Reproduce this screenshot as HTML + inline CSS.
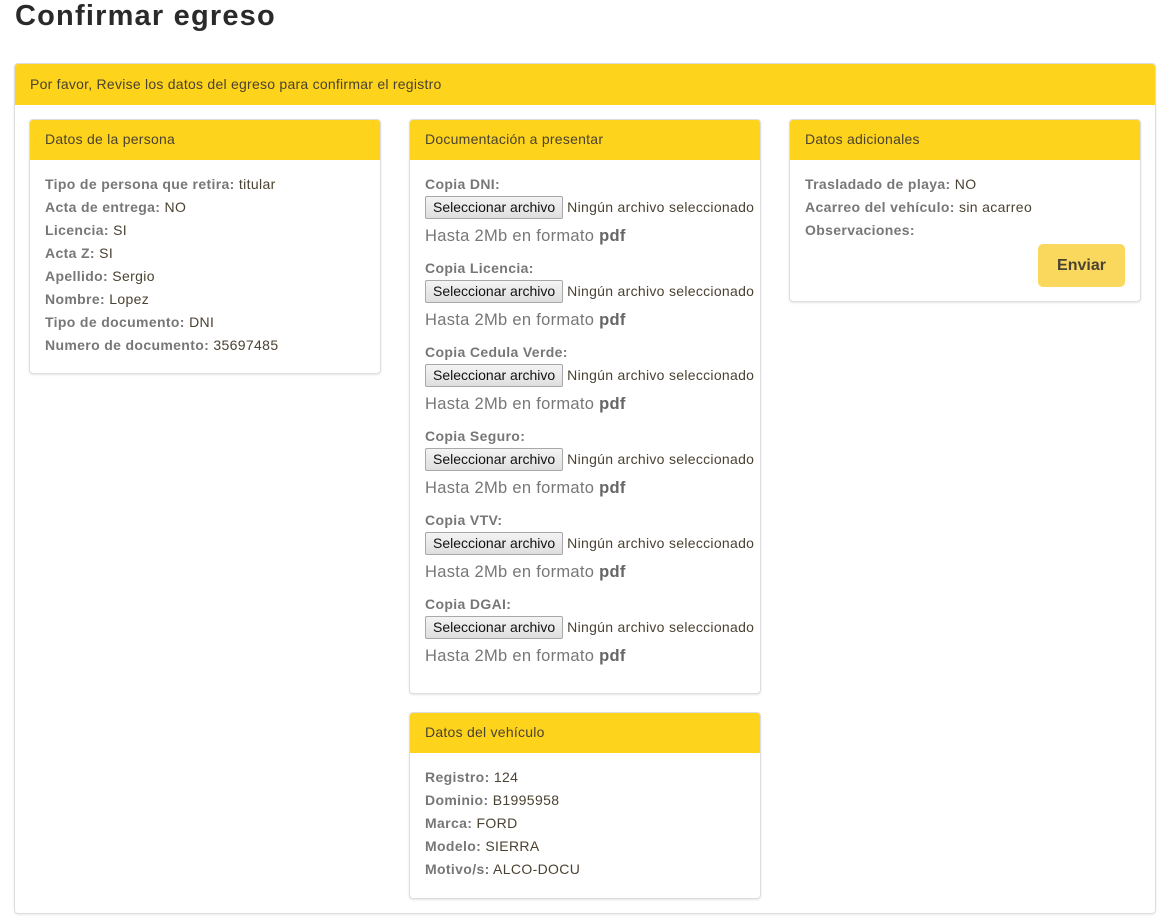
<!DOCTYPE html>
<html><head><meta charset="utf-8"><style>
*{box-sizing:border-box;margin:0;padding:0}
body{width:1172px;height:921px;background:#fff;font-family:"Liberation Sans",sans-serif;font-size:14px;color:#4a4232;position:relative;overflow:hidden}
h1{position:absolute;left:15px;top:0px;font-size:29px;font-weight:bold;color:#2a2a2a;letter-spacing:1.2px}
.outer{position:absolute;left:14px;top:63px;width:1142px;height:851px;border:1px solid #ddd;border-radius:4px;box-shadow:0 1px 2px rgba(0,0,0,.08)}
.outer>.hd{height:41px;background:#fdd31b;padding:12px 15px 0;color:#4a4232;font-size:14px;border-radius:3px 3px 0 0;letter-spacing:0.25px}
.p{position:absolute;width:352px;border:1px solid #ddd;border-radius:4px;box-shadow:0 1px 2px rgba(0,0,0,.1);background:#fff}
.p .hd{height:40px;background:#fdd31b;padding:11px 15px 0;color:#4a4232;border-radius:3px 3px 0 0;letter-spacing:0.25px}
.p .bd{padding:15px 15px 0}
.ln{height:23px;line-height:23px;white-space:nowrap;letter-spacing:0.35px}
b{color:#777}
.lab{font-weight:bold;color:#777;height:20px;line-height:20px;letter-spacing:0.35px}
.f{height:26px;display:flex;align-items:center;white-space:nowrap;font-size:14px}
.f .t{letter-spacing:0.3px}
.btn{display:inline-block;height:23px;line-height:21px;padding:0 7px;border:1px solid #a8a8a8;border-radius:2px;background:linear-gradient(#f4f4f4,#dedede);color:#111;font-size:14px;margin-right:4px}
.h2{font-size:16.5px;color:#777;height:26px;line-height:26px;margin-bottom:12px;padding-top:3px;letter-spacing:0.3px}
.h2 b{color:#666}
.env{position:absolute;left:248px;top:124px;width:87px;height:43px;background:#fad85e;border-radius:5px;font-weight:bold;font-size:16px;color:#4a4232;text-align:center;line-height:43px}
</style></head><body>
<h1>Confirmar egreso</h1>
<div class="outer"><div class="hd">Por favor, Revise los datos del egreso para confirmar el registro</div></div>

<div class="p" style="left:29px;top:119px;height:255px"><div class="hd">Datos de la persona</div><div class="bd" style="padding-top:13px">
<div class="ln"><b>Tipo de persona que retira:</b> titular</div>
<div class="ln"><b>Acta de entrega:</b> NO</div>
<div class="ln"><b>Licencia:</b> SI</div>
<div class="ln"><b>Acta Z:</b> SI</div>
<div class="ln"><b>Apellido:</b> Sergio</div>
<div class="ln"><b>Nombre:</b> Lopez</div>
<div class="ln"><b>Tipo de documento:</b> DNI</div>
<div class="ln"><b>Numero de documento:</b> 35697485</div>
</div></div>

<div class="p" style="left:409px;top:119px;height:575px"><div class="hd">Documentación a presentar</div><div class="bd" style="padding-top:14px">
<div class="lab">Copia DNI:</div><div class="f"><span class="btn">Seleccionar archivo</span><span class="t">Ningún archivo seleccionado</span></div><div class="h2">Hasta 2Mb en formato <b>pdf</b></div>
<div class="lab">Copia Licencia:</div><div class="f"><span class="btn">Seleccionar archivo</span><span class="t">Ningún archivo seleccionado</span></div><div class="h2">Hasta 2Mb en formato <b>pdf</b></div>
<div class="lab">Copia Cedula Verde:</div><div class="f"><span class="btn">Seleccionar archivo</span><span class="t">Ningún archivo seleccionado</span></div><div class="h2">Hasta 2Mb en formato <b>pdf</b></div>
<div class="lab">Copia Seguro:</div><div class="f"><span class="btn">Seleccionar archivo</span><span class="t">Ningún archivo seleccionado</span></div><div class="h2">Hasta 2Mb en formato <b>pdf</b></div>
<div class="lab">Copia VTV:</div><div class="f"><span class="btn">Seleccionar archivo</span><span class="t">Ningún archivo seleccionado</span></div><div class="h2">Hasta 2Mb en formato <b>pdf</b></div>
<div class="lab">Copia DGAI:</div><div class="f"><span class="btn">Seleccionar archivo</span><span class="t">Ningún archivo seleccionado</span></div><div class="h2">Hasta 2Mb en formato <b>pdf</b></div>
</div></div>

<div class="p" style="left:409px;top:712px;height:187px"><div class="hd">Datos del vehículo</div><div class="bd" style="padding-top:13px">
<div class="ln"><b>Registro:</b> 124</div>
<div class="ln"><b>Dominio:</b> B1995958</div>
<div class="ln"><b>Marca:</b> FORD</div>
<div class="ln"><b>Modelo:</b> SIERRA</div>
<div class="ln"><b>Motivo/s:</b> ALCO-DOCU</div>
</div></div>

<div class="p" style="left:789px;top:119px;height:183px"><div class="hd">Datos adicionales</div><div class="bd" style="padding-top:13px">
<div class="ln"><b>Trasladado de playa:</b> NO</div>
<div class="ln"><b>Acarreo del vehículo:</b> sin acarreo</div>
<div class="ln"><b>Observaciones:</b></div>
</div><div class="env">Enviar</div></div>
</body></html>
